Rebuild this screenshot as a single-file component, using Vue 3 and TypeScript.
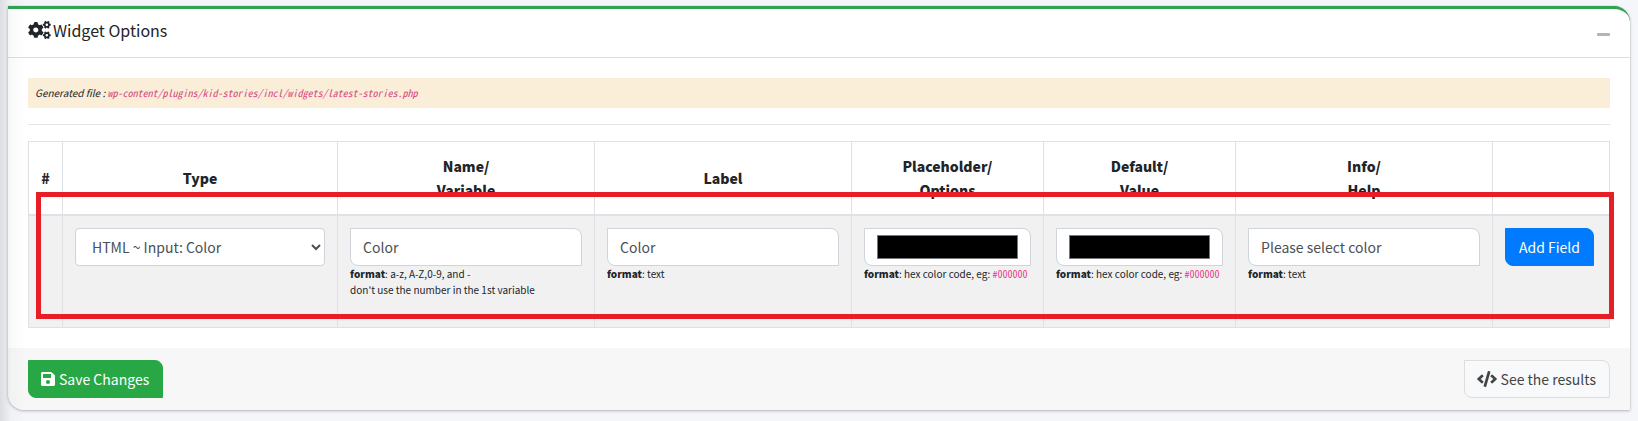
<script setup lang="ts">
import { ref } from 'vue'

interface Field {
  id: string
  kind: 'text' | 'color'
  value: string
  note: string
  code?: string
  extra?: string
}

const columns = [
  { id: 'num', lines: ['#'] },
  { id: 'type', lines: ['Type'] },
  { id: 'name', lines: ['Name/', 'Variable'] },
  { id: 'label', lines: ['Label'] },
  { id: 'placeholder', lines: ['Placeholder/', 'Options'] },
  { id: 'default', lines: ['Default/', 'Value'] },
  { id: 'info', lines: ['Info/', 'Help'] },
  { id: 'action', lines: [] as string[] },
]

const fieldType = ref('color')
const fields = ref<Field[]>([
  { id: 'name', kind: 'text', value: 'Color', note: 'a-z, A-Z,0-9, and -', extra: "don't use the number in the 1st variable" },
  { id: 'label', kind: 'text', value: 'Color', note: 'text' },
  { id: 'placeholder', kind: 'color', value: '#000000', note: 'hex color code, eg: ', code: '#000000' },
  { id: 'default', kind: 'color', value: '#000000', note: 'hex color code, eg: ', code: '#000000' },
  { id: 'info', kind: 'text', value: 'Please select color', note: 'text' },
])

const smallCog =
  'M512.1 191l-8.2 14.3c-3 5.3-9.4 7.5-15.1 5.4-11.8-4.4-22.6-10.7-32.1-18.6-4.6-3.8-5.8-10.5-2.8-15.7l8.2-14.3c-6.9-8-12.3-17.3-15.9-27.4h-16.5c-6 0-11.2-4.3-12.2-10.3-2-12-2.1-24.6 0-37.1 1-6 6.2-10.4 12.2-10.4h16.5c3.6-10.1 9-19.4 15.9-27.4l-8.2-14.3c-3-5.2-1.9-11.9 2.8-15.7 9.5-7.9 20.4-14.2 32.1-18.6 5.7-2.1 12.1.1 15.1 5.4l8.2 14.3c10.5-1.9 21.2-1.9 31.7 0L552 6.3c3-5.3 9.4-7.5 15.1-5.4 11.8 4.4 22.6 10.7 32.1 18.6 4.6 3.8 5.8 10.5 2.8 15.7l-8.2 14.3c6.9 8 12.3 17.3 15.9 27.4h16.5c6 0 11.2 4.3 12.2 10.3 2 12 2.1 24.6 0 37.1-1 6-6.2 10.4-12.2 10.4h-16.5c-3.6 10.1-9 19.4-15.9 27.4l8.2 14.3c3 5.2 1.9 11.9-2.8 15.7-9.5 7.9-20.4 14.2-32.1 18.6-5.7 2.1-12.1-.1-15.1-5.4l-8.2-14.3c-10.4 1.9-21.2 1.9-31.7 0zm-10.5-58.8c38.5 29.6 82.4-14.3 52.8-52.8-38.5-29.7-82.4 14.3-52.8 52.8z'
</script>

<template>
  <main class="page">
    <form class="card" @submit.prevent>
      <header class="card-header">
        <h3 class="title">
          <svg class="icon-cogs" viewBox="0 0 640 512" aria-hidden="true">
            <path :d="smallCog" />
            <path :d="smallCog" transform="translate(0 298.7)" />
            <path d="M386.3 286.1l33.7 16.8c10.1 5.8 14.5 18.1 10.5 29.1-8.9 24.2-26.4 46.4-42.6 65.8-7.4 8.9-20.2 11.1-30.3 5.3l-29.1-16.8c-16 13.7-34.6 24.6-54.9 31.7v33.6c0 11.6-8.3 21.6-19.7 23.6-24.6 4.2-50.4 4.4-75.9 0-11.5-2-20-11.9-20-23.6V418c-20.3-7.2-38.9-18-54.9-31.7L74 403c-10 5.8-22.9 3.6-30.3-5.3-16.2-19.4-33.3-41.6-42.2-65.7-4-10.9.4-23.2 10.5-29.1l33.3-16.8c-3.9-20.9-3.9-42.4 0-63.4L12 205.8c-10.1-5.8-14.6-18.1-10.5-29 8.9-24.2 26-46.4 42.2-65.8 7.4-8.9 20.2-11.1 30.3-5.3l29.1 16.8c16-13.7 34.6-24.6 54.9-31.7V57.1c0-11.5 8.2-21.5 19.6-23.5 24.6-4.2 50.5-4.4 76-.1 11.5 2 20 11.9 20 23.6v33.6c20.3 7.2 38.9 18 54.9 31.7l29.1-16.8c10-5.8 22.9-3.6 30.3 5.3 16.2 19.4 33.2 41.6 42.1 65.8 4 10.9.1 23.2-10 29.1l-33.7 16.8c3.9 21 3.9 42.5 0 63.5zm-117.6 21.1c59.2-77-28.7-164.9-105.7-105.7-59.2 77 28.7 164.9 105.7 105.7z" />
          </svg>
          Widget Options
        </h3>
        <button type="button" class="collapse" aria-label="Collapse">
          <svg class="icon-minus" viewBox="0 0 448 512" aria-hidden="true">
            <path d="M416 208H32c-17.67 0-32 14.33-32 32v32c0 17.67 14.33 32 32 32h384c17.67 0 32-14.33 32-32v-32c0-17.67-14.33-32-32-32z" />
          </svg>
        </button>
      </header>

      <div class="card-body">
        <p class="notice">Generated file : <code>wp-content/plugins/kid-stories/incl/widgets/latest-stories.php</code></p>
        <hr class="rule" />
        <div class="table-wrap">
          <table class="fields">
            <colgroup>
              <col v-for="col in columns" :key="col.id" :class="`col-${col.id}`" />
            </colgroup>
            <thead>
              <tr>
                <th v-for="col in columns" :id="`head-${col.id}`" :key="col.id" scope="col">
                  <span v-for="line in col.lines" :key="line" class="line">{{ line }}</span>
                </th>
              </tr>
            </thead>
            <tbody>
              <tr>
                <td></td>
                <td>
                  <select v-model="fieldType" class="control select" aria-labelledby="head-type">
                    <option value="color">HTML ~ Input: Color</option>
                  </select>
                </td>
                <td v-for="field in fields" :key="field.id">
                  <input v-model="field.value" :type="field.kind" class="control" :aria-labelledby="`head-${field.id}`" />
                  <p class="help">
                    <strong>format</strong>: {{ field.note }}<code v-if="field.code">{{ field.code }}</code>
                    <span v-if="field.extra" class="line">{{ field.extra }}</span>
                  </p>
                </td>
                <td><button type="button" class="btn btn-primary">Add Field</button></td>
              </tr>
            </tbody>
          </table>
          <div class="highlight" aria-hidden="true"></div>
        </div>
      </div>

      <footer class="card-footer">
        <button type="submit" class="btn btn-success">
          <svg class="icon-save" viewBox="0 0 448 512" aria-hidden="true">
            <path d="M433.941 129.941l-83.882-83.882A48 48 0 0 0 316.118 32H48C21.49 32 0 53.49 0 80v352c0 26.51 21.49 48 48 48h352c26.51 0 48-21.49 48-48V163.882a48 48 0 0 0-14.059-33.941zM224 416c-35.346 0-64-28.654-64-64 0-35.346 28.654-64 64-64s64 28.654 64 64c0 35.346-28.654 64-64 64zm96-304.52V212c0 6.627-5.373 12-12 12H76c-6.627 0-12-5.373-12-12V108c0-6.627 5.373-12 12-12h228.52c3.183 0 6.235 1.264 8.485 3.515l3.48 3.48A11.996 11.996 0 0 1 320 111.48z" />
          </svg>
          Save Changes
        </button>
        <button type="button" class="btn btn-light">
          <svg class="icon-code" viewBox="0 0 640 512" aria-hidden="true">
            <path d="M278.9 511.5l-61-17.7c-6.4-1.8-10-8.5-8.2-14.9L346.2 8.7c1.8-6.4 8.5-10 14.9-8.2l61 17.7c6.4 1.8 10 8.5 8.2 14.9L293.8 503.3c-1.9 6.4-8.5 10.1-14.9 8.2zm-114-112.2l43.5-46.4c4.6-4.9 4.3-12.7-.8-17.2L117 256l90.6-79.7c5.1-4.5 5.5-12.3.8-17.2l-43.5-46.4c-4.5-4.8-12.1-5.1-17-.5L3.8 247.2c-5.1 4.7-5.1 12.8 0 17.5l144.1 135.1c4.9 4.6 12.5 4.4 17-.5zm327.2.6l144.1-135.1c5.1-4.7 5.1-12.8 0-17.5L492.1 112.1c-4.8-4.5-12.4-4.3-17 .5L431.6 159c-4.6 4.9-4.3 12.7.8 17.2L523 256l-90.6 79.7c-5.1 4.5-5.5 12.3-.8 17.2l43.5 46.4c4.5 4.9 12.1 5.1 17 .6z" />
          </svg>
          See the results
        </button>
      </footer>
    </form>
  </main>
</template>

<style>
body {
  background: #f4f6f9;
}
</style>

<style scoped>
.page,
.page * {
  box-sizing: border-box;
}

.page {
  position: relative;
  padding: 6px 8px 11px;
  font-family: 'Noto Sans CJK SC', 'Noto Sans', sans-serif;
  font-size: 14px;
  line-height: 24px;
  color: #212529;
}

/* Soft shade cast by the sidebar on the left edge of the content */
.page::after {
  content: '';
  position: absolute;
  inset: 0 auto 0 0;
  width: 28px;
  background: linear-gradient(to right, rgba(0, 0, 0, 0.1), rgba(0, 0, 0, 0.02) 40%, transparent);
  pointer-events: none;
}

.card {
  background: #fff;
  border-top: 3px solid #33a351;
  border-radius: 0 16px;
  box-shadow: 0 0 1px rgba(0, 0, 0, 0.3), 0 1px 3px rgba(0, 0, 0, 0.25);
}

.card-header {
  display: flex;
  align-items: center;
  justify-content: space-between;
  height: 49px;
  padding: 0 20px;
  border-bottom: 1px solid #dfdfdf;
}

.title {
  display: flex;
  align-items: center;
  gap: 2px;
  margin: 0;
  padding-bottom: 6px;
  font-size: 16px;
  font-weight: 400;
}

.page svg {
  flex: none;
  fill: currentColor;
}

.icon-cogs {
  width: 23px;
  height: 18px;
}

.collapse {
  display: flex;
  padding: 2px 0 0;
  border: 0;
  background: none;
  color: #adb5bd;
}

.icon-minus {
  width: 13px;
  height: 15px;
}

.card-body {
  padding: 20px;
}

.notice {
  margin: 0;
  padding: 7px;
  background: #faeed9;
  font-size: 10px;
  font-style: italic;
  line-height: 16px;
  color: #212529;
}

code {
  font-family: 'Noto Sans Mono CJK SC', 'Liberation Mono', monospace;
  font-size: 10px;
  color: #e83e8c;
}

.notice code {
  color: #d6457f;
}

.rule {
  margin: 16px 0;
  border: 0;
  border-top: 1px solid #e5e5e5;
}

.table-wrap {
  position: relative;
}

.fields {
  width: 100%;
  table-layout: fixed;
  border-collapse: collapse;
}

.col-num { width: 34px; }
.col-type { width: 17.4%; }
.col-name,
.col-label,
.col-info { width: 16.25%; }
.col-placeholder,
.col-default { width: 12.15%; }
.col-action { width: 117px; }

th,
td {
  padding: 12px;
  border: 1px solid #dee2e6;
}

th {
  padding: 12px 4px;
  border-bottom-width: 2px;
  font-weight: 900;
  text-align: center;
  vertical-align: middle;
}

td {
  background: #f1f1f1;
  vertical-align: top;
}

.line {
  display: block;
}

.control {
  display: block;
  width: 100%;
  height: 38px;
  margin: 0;
  padding: 6px 12px;
  border: 1px solid #ced4da;
  border-radius: 0 8px;
  background: #fff;
  font: inherit;
  color: #495057;
}

.select {
  border-radius: 4px;
}

.control::-webkit-color-swatch-wrapper {
  padding: 0;
}

.control::-webkit-color-swatch {
  border: 1px solid #777;
  border-radius: 0;
}

.help {
  margin: 0 0 17px;
  font-size: 10px;
  line-height: 16px;
  white-space: nowrap;
}

.help strong {
  font-weight: 900;
}

.highlight {
  position: absolute;
  inset: 51px -4px 9px 8px;
  border: 5px solid #e81e26;
  pointer-events: none;
}

.card-footer {
  display: flex;
  justify-content: space-between;
  padding: 12px 20px;
  border-radius: 0 0 0 16px;
  background: #f7f7f7;
}

.btn {
  display: flex;
  align-items: center;
  gap: 4px;
  height: 38px;
  padding: 0 13px 0 12px;
  border: 1px solid transparent;
  border-radius: 0 8px;
  font: inherit;
  white-space: nowrap;
  color: #fff;
}

.btn-primary {
  padding: 0 13px;
  border-color: #007bff;
  background: #007bff;
}

.btn-success {
  border-color: #28a745;
  background: #28a745;
}

.btn-light {
  border-color: #ddd;
  background: #f8f9fa;
  color: #444;
}

.icon-save {
  width: 14px;
  height: 16px;
}

.icon-code {
  width: 20px;
  height: 16px;
}
</style>
